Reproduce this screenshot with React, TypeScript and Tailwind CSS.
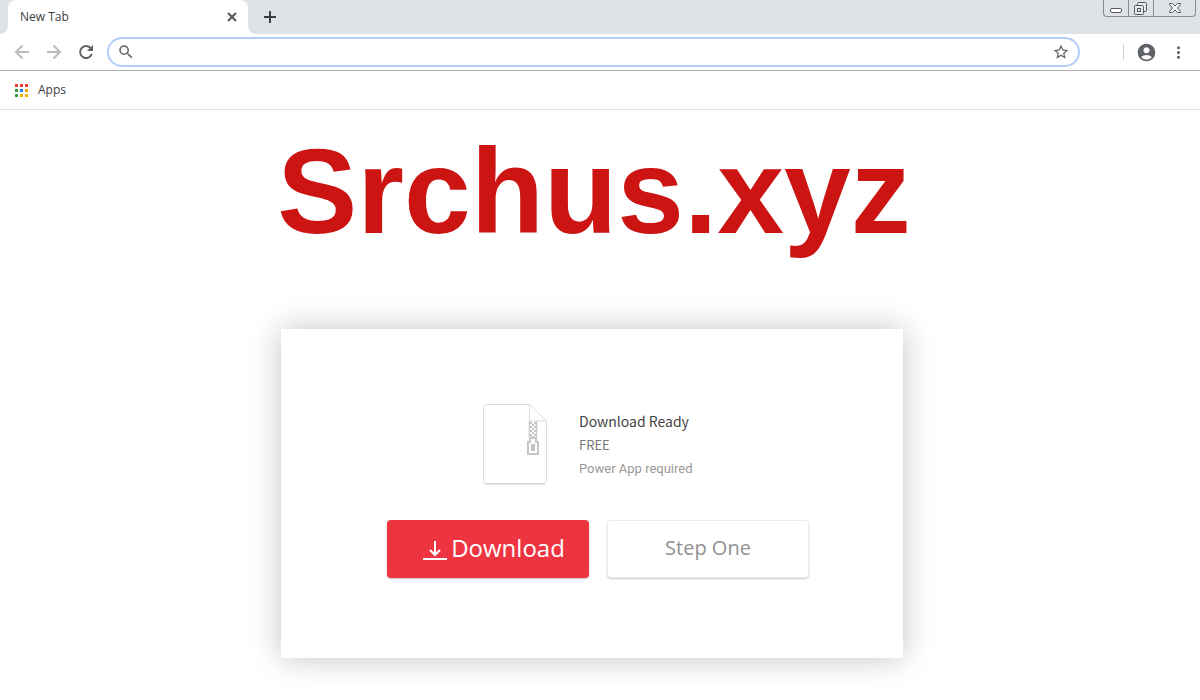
import React from 'react';
import { MdAccountCircle, MdMoreVert, MdSearch, MdStarBorder } from 'react-icons/md';

const appDots = [
  'bg-[#f23a35]', 'bg-[#f23a35]', 'bg-[#f23a35]',
  'bg-[#2e9e55]', 'bg-[#1a82f7]', 'bg-[#f5a500]',
  'bg-[#2e9e55]', 'bg-[#fbb205]', 'bg-[#fbb205]',
];

interface StrokeIconProps {
  path: string;
  children?: React.ReactNode;
}

const StrokeIcon: React.FC<StrokeIconProps> = ({ path, children }) => (
  <svg width="20" height="20" viewBox="0 0 20 20" fill="none" stroke="currentColor" strokeWidth="2">
    <path d={path} />
    {children}
  </svg>
);

const WindowControls: React.FC = () => (
  <div className="mr-1 flex h-[17px] rounded-b border border-t-0 border-[#888b90] text-[#55585c]">
    <button aria-label="Minimize" className="flex w-[25px] items-center justify-center border-r border-[#888b90]">
      <svg width="12" height="16" viewBox="0 0 12 16" fill="#fff" stroke="currentColor">
        <rect x="0.5" y="8.5" width="11" height="4" rx="1.5" />
      </svg>
    </button>
    <button aria-label="Restore" className="flex w-[25px] items-center justify-center border-r border-[#888b90]">
      <svg width="14" height="16" viewBox="0 0 14 16" fill="#e8eaed" stroke="currentColor">
        <rect x="3.5" y="2.5" width="9" height="9" rx="1" />
        <rect x="0.5" y="5.5" width="9" height="9" rx="1" />
        <rect x="3.5" y="8.5" width="3" height="3" />
      </svg>
    </button>
    <button aria-label="Close window" className="flex w-[41px] items-center justify-center">
      <svg width="12" height="16" viewBox="0 0 12 16" fill="#f4f5f6" stroke="currentColor">
        <path d="M.5 3.500h3L6 6l2.500-2.500h3v1L8.500 8l3 3.500v1h-3L6 10l-2.500 2.500h-3v-1L3.500 8l-3-3.500z" />
      </svg>
    </button>
  </div>
);

const TabStrip: React.FC = () => (
  <div className="flex h-[34px] items-start bg-[#dee1e6]">
    <svg className="self-end" width="8" height="8" viewBox="0 0 8 8" fill="#fff">
      <path d="M8 0v8H0a8 8 0 0 0 8-8z" />
    </svg>
    <div className="flex h-full w-60 items-center justify-between rounded-t-lg bg-white pr-[6px] pl-3">
      <span className="text-xs text-[#3c4043]">New Tab</span>
      <button aria-label="Close tab" className="text-[#54575b]">
        <StrokeIcon path="M6 6l8 8M14 6l-8 8" />
      </button>
    </div>
    <svg className="self-end" width="8" height="8" viewBox="0 0 8 8" fill="#fff">
      <path d="M0 0v8h8a8 8 0 0 1-8-8z" />
    </svg>
    <button aria-label="New tab" className="flex h-full w-7 items-center justify-center text-[#3c4043]">
      <StrokeIcon path="M10 4v12M4 10h12" />
    </button>
    <div className="flex-1" />
    <WindowControls />
  </div>
);

const Toolbar: React.FC = () => (
  <div className="flex h-[37px] items-center border-b border-[#b0b0b0] pr-3 pl-3 text-[#5f6368]">
    <div className="flex gap-3">
      <button aria-label="Back" className="text-[#bbbcbe]">
        <StrokeIcon path="M17 10H4.500M10.500 3.500L4 10l6.500 6.500" />
      </button>
      <button aria-label="Forward" className="text-[#bbbcbe]">
        <StrokeIcon path="M3 10h12.500M9.500 3.500L16 10l-6.500 6.500" />
      </button>
      <button aria-label="Reload">
        <StrokeIcon path="M14.500 6A6 6 0 1 0 15.800 12">
          <path d="M17 3v6h-6z" fill="currentColor" stroke="none" />
        </StrokeIcon>
      </button>
    </div>
    <div className="ml-[11px] flex h-[30px] flex-1 items-center rounded-full border-2 border-[#b3cdfb] px-2">
      <MdSearch size={18} />
      <input
        type="text"
        aria-label="Address and search bar"
        className="ml-2 min-w-0 flex-1 bg-transparent text-sm outline-none"
      />
      <button aria-label="Bookmark this page">
        <MdStarBorder size={18} />
      </button>
    </div>
    <div className="ml-[43px] h-4 w-px bg-[#cfd1d4]" />
    <button aria-label="Profile" className="ml-3">
      <MdAccountCircle size={21} />
    </button>
    <button aria-label="Menu" className="ml-3">
      <MdMoreVert size={19} />
    </button>
  </div>
);

const BookmarksBar: React.FC = () => (
  <div className="flex h-[39px] items-center border-b border-[#dfe1e4] pl-[15px]">
    <a href="#apps" className="flex items-center gap-[10px] text-xs text-[#3c4043]">
      <span className="grid grid-cols-3 gap-[2px]">
        {appDots.map((color, i) => (
          <span key={i} className={`size-[3px] ${color}`} />
        ))}
      </span>
      Apps
    </a>
  </div>
);

const ZipFileIcon: React.FC = () => (
  <svg width="66" height="82" viewBox="0 0 66 82" fill="none">
    <path d="M4.500 1.500H48L64.500 18v59.500a3 3 0 0 1-3 3h-57a3 3 0 0 1-3-3v-73a3 3 0 0 1 3-3z" fill="#fff" stroke="#dcdcdc" />
    <path d="M3 81h60" stroke="#cfcfcf" />
    <path d="M47.500 1.500v16.500h17" stroke="#dcdcdc" />
    <path d="M47.500 18v17M54.500 18v17" stroke="#c8c8c8" strokeWidth="1.500" />
    <path
      d="M48 19h2v2h-2zM52 19h2v2h-2zM50 21h2v2h-2zM48 23h2v2h-2zM52 23h2v2h-2zM50 25h2v2h-2zM48 27h2v2h-2zM52 27h2v2h-2zM50 29h2v2h-2zM48 31h2v2h-2zM52 31h2v2h-2zM50 33h2v2h-2z"
      fill="#c4c4c4"
    />
    <path d="M48 35v4h-2v12h10v-12h-2v-4z" stroke="#c8c8c8" strokeWidth="2" />
    <rect x="49" y="41" width="4" height="7" fill="#c4c4c4" />
  </svg>
);

const DownloadCard: React.FC = () => (
  <section className="mt-[68px] w-full max-w-[622px] bg-white pt-[74px] pr-[94px] pb-20 pl-[106px] shadow-[0_0_30px_rgba(0,0,0,0.24)]">
    <div className="flex items-start gap-[31px] pl-[95px]">
      <ZipFileIcon />
      <div className="pt-[6px]">
        <h2 className="font-['Noto_Sans_CJK_SC',sans-serif] text-[14px] leading-6 text-[#444]">Download Ready</h2>
        <p className="font-['Noto_Sans_CJK_SC',sans-serif] text-[13px] leading-6 text-[#777]">FREE</p>
        <p className="font-[Roboto,sans-serif] text-[13px] leading-6 text-[#999]">Power App required</p>
      </div>
    </div>
    <div className="mt-[35px] grid grid-cols-2 gap-[18px]">
      <button className="flex h-[58px] items-center justify-center gap-1 rounded bg-[#ee3440] pb-[2px] pl-3 text-2xl text-white shadow-[0_1px_2px_rgba(0,0,0,0.25)]">
        <svg width="24" height="24" viewBox="0 0 24 24" fill="none" stroke="currentColor" strokeWidth="2">
          <path d="M12 5v14M7 14l5 5 5-5M0 23h24" />
        </svg>
        Download
      </button>
      <button className="h-[58px] rounded border border-[#ebebeb] bg-white pb-[2px] text-xl text-[#929292] shadow-[0_1px_2px_rgba(0,0,0,0.2)]">
        Step One
      </button>
    </div>
  </section>
);

const App: React.FC = () => {
  return (
    <div className="min-h-screen bg-white font-['Open_Sans',sans-serif]">
      <header>
        <TabStrip />
        <Toolbar />
        <BookmarksBar />
      </header>
      <main className="flex flex-col items-center pt-[11px] pr-4 pb-10">
        <h1 className="pl-1 font-['Liberation_Sans',sans-serif] text-[120px] leading-[140px] font-bold text-[#cc1413]">
          Srchus.xyz
        </h1>
        <DownloadCard />
      </main>
    </div>
  );
};

export default App;
